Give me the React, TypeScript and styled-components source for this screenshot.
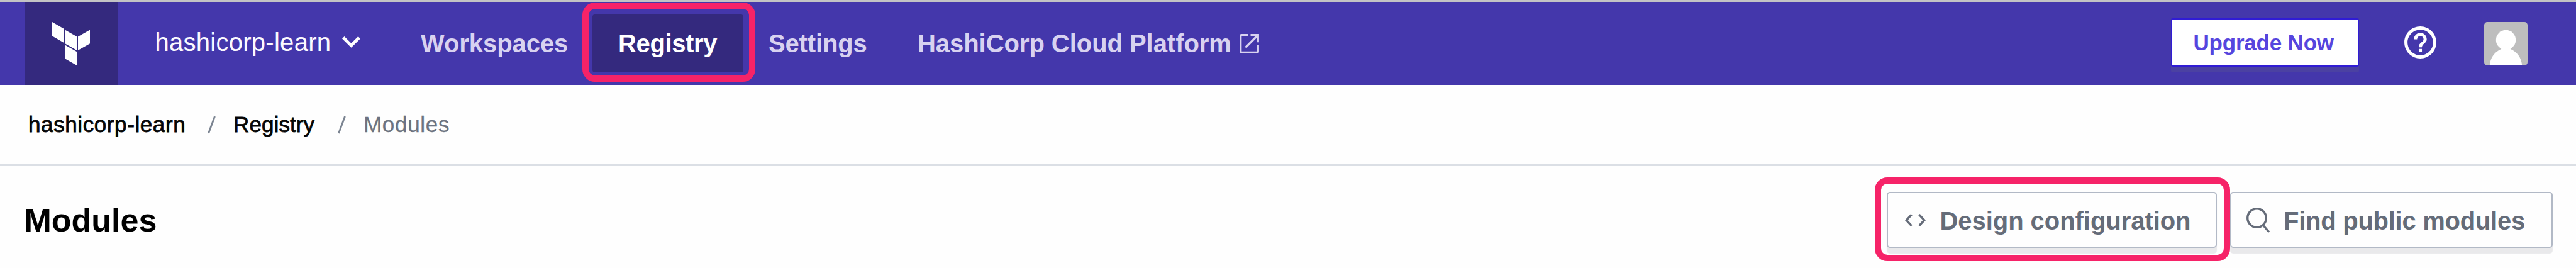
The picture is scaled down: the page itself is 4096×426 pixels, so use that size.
import React from "react";
import styled, { createGlobalStyle, css } from "styled-components";

const GlobalStyle = createGlobalStyle`
  *, *::before, *::after { box-sizing: border-box; }
  body {
    margin: 0;
    background: #fefefe;
    font-family: "Liberation Sans", Arial, sans-serif;
  }
  svg { display: block; flex: none; overflow: visible; }
`;

const Page = styled.div`
  display: flex;
  flex-direction: column;
  height: 426px;
  overflow: hidden;
`;

const Header = styled.header`
  display: flex;
  align-items: center;
  height: 135px;
  flex: none;
  border-top: 3px solid #c3c3c5;
  background: #4437ab;
`;

const LogoTile = styled.a`
  display: flex;
  align-items: center;
  justify-content: center;
  width: 148px;
  height: 132px;
  margin-left: 40px;
  padding-right: 2px;
  background: #34297e;
`;

const OrgSwitcher = styled.div`
  display: flex;
  align-items: center;
  gap: 17.5px;
  width: 481px;
  padding: 0 0 5px 58.5px;
  color: #fbfaff;
  font-size: 40px;
  line-height: 48px;
  letter-spacing: 0.27px;
`;

const highlight = css`
  position: relative;
  &::after {
    content: "";
    position: absolute;
    border: 10px solid #f62368;
    border-radius: 20px;
  }
`;

const Nav = styled.nav`
  display: flex;
  align-items: center;
`;

const NavLink = styled.a<{ $width?: number; $pad?: number; $tracking?: number; $active?: boolean }>`
  display: flex;
  align-items: center;
  gap: 13.5px;
  height: 92px;
  width: ${(p) => (p.$width ? `${p.$width}px` : "auto")};
  padding-left: ${(p) => p.$pad ?? 0}px;
  border-radius: 4px;
  color: #d8d2f0;
  font-size: 40px;
  font-weight: 700;
  line-height: 48px;
  white-space: nowrap;
  letter-spacing: ${(p) => p.$tracking ?? 0}px;
  ${(p) =>
    p.$active &&
    css`
      color: #fff;
      background: #34297e;
      ${highlight}
      &::after {
        inset: -19px -18.5px -15px -16px;
      }
    `}
`;

const HeaderActions = styled.div`
  display: flex;
  align-items: center;
  margin-left: auto;
  padding-right: 77px;
`;

const UpgradeButton = styled.button`
  display: flex;
  align-items: center;
  width: 299px;
  height: 77px;
  margin: 0 67.5px 3px 0;
  padding: 1px 0 0 34px;
  border: 2.5px solid #301cd4;
  border-radius: 3px;
  background: #fff;
  box-shadow: 0 9px 0 #4b41a2;
  color: #5645de;
  font: 700 35px/42px "Liberation Sans", Arial, sans-serif;
  letter-spacing: -0.2px;
  white-space: nowrap;
`;

const HelpIcon = styled.svg`
  width: 61px;
  height: 61px;
  margin: 0 71px 3px 0;
  fill: #fff;
`;

const Avatar = styled.svg`
  width: 69px;
  height: 69px;
  border-radius: 5px;
  background: #bebebe;
  fill: #fff;
`;

const Breadcrumbs = styled.div`
  display: flex;
  align-items: center;
  height: 129px;
  flex: none;
  padding-left: 45px;
  border-bottom: 3px solid #dbdfe5;
  font-size: 35px;
  line-height: 42px;
`;

const Crumb = styled.a<{ $width?: number; $tracking: number; $current?: boolean }>`
  width: ${(p) => (p.$width ? `${p.$width}px` : "auto")};
  color: ${(p) => (p.$current ? "#6c7380" : "#050505")};
  -webkit-text-stroke: ${(p) => (p.$current ? "0.3px" : "0.8px")} currentColor;
  letter-spacing: ${(p) => p.$tracking}px;
`;

const Separator = styled.svg`
  width: 13px;
  height: 27px;
  margin-right: 28.5px;
  stroke: #7b8491;
  stroke-width: 2.8;
`;

const PageHeader = styled.main`
  display: flex;
  align-items: flex-start;
  justify-content: space-between;
  flex: 1;
  padding: 40.5px 37.5px 0 38.5px;
`;

const Title = styled.h1`
  margin: 15px 0 0;
  color: #000;
  font-size: 52px;
  font-weight: 700;
  line-height: 60px;
`;

const Actions = styled.div`
  display: flex;
  gap: 21px;
`;

const ActionButton = styled.button<{ $width: number; $tracking: number; $highlighted?: boolean }>`
  display: flex;
  align-items: center;
  width: ${(p) => p.$width}px;
  height: 89px;
  padding: 4px 0 0;
  border: 2.5px solid #b2b9c6;
  border-radius: 5px;
  background: #fefefe;
  box-shadow: 0 9px 1px #e9e9eb;
  color: #656c79;
  font: 700 40px/48px "Liberation Sans", Arial, sans-serif;
  letter-spacing: ${(p) => p.$tracking}px;
  white-space: nowrap;
  ${(p) =>
    p.$highlighted &&
    css`
      ${highlight}
      z-index: 1;
      &::after {
        inset: -24.5px -23px -23px -20.5px;
      }
    `}
`;

const CodeIcon = styled.svg`
  width: 33px;
  height: 20px;
  margin: 0 23px 2px 27px;
  fill: none;
  stroke: #656c79;
  stroke-width: 3.4;
`;

const SearchIcon = styled.svg`
  width: 37px;
  height: 40px;
  margin: 0 22.5px 1.5px 23.5px;
  fill: none;
  stroke: #656c79;
  stroke-width: 3.4;
`;

function TerraformLogo() {
  return (
    <svg width="60" height="69" viewBox="0 0 60 69" fill="#fff">
      <path d="M0 0 18.6 10.8V33L0 22.2Z" />
      <path d="M20.4 12.4 39.2 23.2V45L20.4 34.2Z" />
      <path d="M41 23.2 60 12.4V34.2L41 45Z" />
      <path d="M20.4 36.4 39.2 47.2V69L20.4 58.2Z" />
    </svg>
  );
}

export default function App() {
  return (
    <Page>
      <GlobalStyle />
      <Header>
        <LogoTile aria-label="Terraform">
          <TerraformLogo />
        </LogoTile>
        <OrgSwitcher>
          hashicorp-learn
          <svg width="29" height="17" viewBox="0 0 29 17" fill="none" stroke="#fff" strokeWidth="5">
            <path d="M1.8 1.8 14.5 14.2 27.2 1.8" />
          </svg>
        </OrgSwitcher>
        <Nav>
          <NavLink $width={273} $tracking={-0.07}>Workspaces</NavLink>
          <NavLink $width={240} $pad={41} $tracking={-0.37} $active>Registry</NavLink>
          <NavLink $width={277} $pad={40} $tracking={-0.16}>Settings</NavLink>
          <NavLink $tracking={-0.05}>
            HashiCorp Cloud Platform
            <svg width="31" height="31" viewBox="0 0 31 31" fill="none" stroke="#d8d2f0" strokeWidth="3.3">
              <path d="M14 1.7H3.2A1.5 1.5 0 0 0 1.7 3.2V27.8A1.5 1.5 0 0 0 3.2 29.3H27.8A1.5 1.5 0 0 0 29.3 27.8V17" />
              <path d="M9.5 21.5 28.5 2.5M17.5 1.7H29.3V13.2" />
            </svg>
          </NavLink>
        </Nav>
        <HeaderActions>
          <UpgradeButton>Upgrade Now</UpgradeButton>
          <HelpIcon viewBox="0 0 24 24">
            <path d="M11 18h2v-2h-2v2zm1-16C6.48 2 2 6.48 2 12s4.48 10 10 10 10-4.48 10-10S17.52 2 12 2zm0 18c-4.41 0-8-3.59-8-8s3.59-8 8-8 8 3.59 8 8-3.59 8-8 8zm0-14c-2.21 0-4 1.79-4 4h2c0-1.1.9-2 2-2s2 .9 2 2c0 2-3 1.75-3 5h2c0-2.25 3-2.5 3-5 0-2.21-1.79-4-4-4z" />
          </HelpIcon>
          <Avatar viewBox="0 0 69 69">
            <circle cx="34.5" cy="28.5" r="15.7" />
            <path d="M8.7 69C10 57 16 48 26 43.500Q29 42 27 38H42Q40 42 43 43.500C53 48 59 57 60.300 69Z" />
          </Avatar>
        </HeaderActions>
      </Header>
      <Breadcrumbs>
        <Crumb $width={284.5} $tracking={0.6}>hashicorp-learn</Crumb>
        <Separator viewBox="0 0 13 27"><path d="M1.5 27 11.5 0" /></Separator>
        <Crumb $width={165.500} $tracking={0.1}>Registry</Crumb>
        <Separator viewBox="0 0 13 27"><path d="M1.5 27 11.5 0" /></Separator>
        <Crumb $tracking={0.7} $current>Modules</Crumb>
      </Breadcrumbs>
      <PageHeader>
        <Title>Modules</Title>
        <Actions>
          <ActionButton $width={525.5} $tracking={-0.05} $highlighted>
            <CodeIcon viewBox="0 0 33 20">
              <path d="M10.500 1.200 2.200 10 10.500 18.800M22.500 1.200 30.800 10 22.500 18.800" />
            </CodeIcon>
            Design configuration
          </ActionButton>
          <ActionButton $width={512.5} $tracking={-0.26}>
            <SearchIcon viewBox="0 0 37 40">
              <circle cx="16.500" cy="16.500" r="14.800" />
              <path d="M26.500 28 36 39" />
            </SearchIcon>
            Find public modules
          </ActionButton>
        </Actions>
      </PageHeader>
    </Page>
  );
}
